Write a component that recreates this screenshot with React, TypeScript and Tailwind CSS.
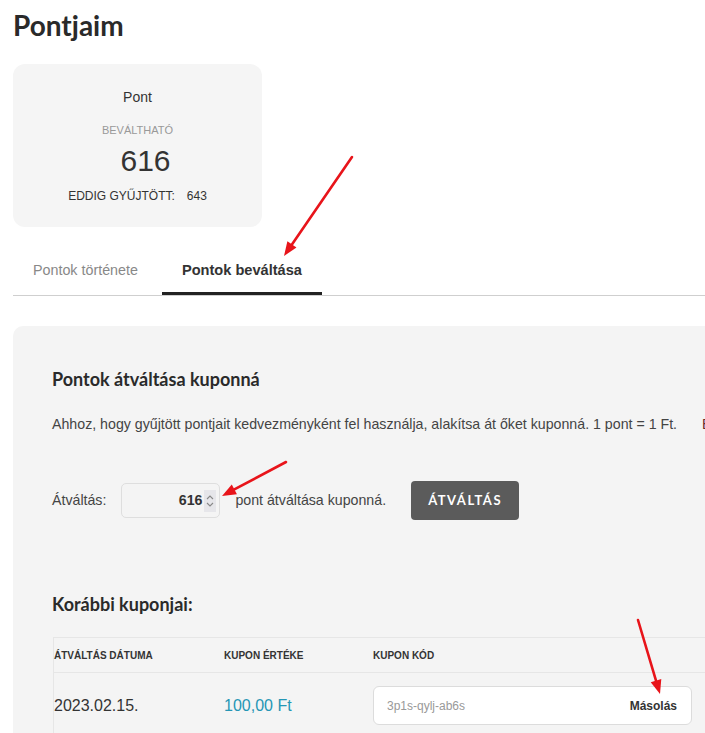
import React from 'react';

const arial = { fontFamily: '"Liberation Sans", Arial, sans-serif' };

function Arrow({x1, y1, x2, y2}: {x1: number; y1: number; x2: number; y2: number}) {
    // red annotation arrow, head drawn at (x2, y2)
    const a = Math.atan2(y2 - y1, x2 - x1);
    const len = 14;
    const w = 5.5;
    const bx = x2 - Math.cos(a) * len;
    const by = y2 - Math.sin(a) * len;
    const px = -Math.sin(a) * w;
    const py = Math.cos(a) * w;
    return (
        <g>
            <line x1={x1} y1={y1} x2={bx} y2={by} stroke="#e8141a" strokeWidth={2.6} strokeLinecap="round"/>
            <polygon points={`${x2},${y2} ${bx + px},${by + py} ${bx - px},${by - py}`} fill="#e8141a"/>
        </g>
    );
}

const App = () => {
    return (
        <div className="relative w-[705px] h-[733px] overflow-hidden bg-white text-[#333]" style={arial}>
            <div className="pl-[13px]">
                <h1 className="pt-2 text-[28px] leading-[34px] font-bold text-[#2a2a2a] font-['Lato']">Pontjaim</h1>

                <div className="mt-[22px] w-[249px] h-[163px] rounded-[12px] bg-[#f5f5f5] flex flex-col items-center pt-[23px]">
                    <div className="text-[14px] leading-[20px] text-[#333]">Pont</div>
                    <div className="mt-[15px] text-[11px] leading-[16px] text-[#999]">BEVÁLTHATÓ</div>
                    <div className="mt-[5px] pl-4 text-[30px] leading-[36px] text-[#333]">616</div>
                    <div className="mt-[9px] flex gap-3 text-[12px] leading-[16px] text-[#333]">
                        <span>EDDIG GYŰJTÖTT:</span>
                        <span>643</span>
                    </div>
                </div>

                <div className="mt-[18px] flex gap-1 border-b border-[#cfcfcf]">
                    <div className="h-[50px] pt-1 px-5 flex items-center border-b-[3px] border-transparent text-[14.3px] text-[#888]">
                        Pontok története
                    </div>
                    <div className="h-[50px] pt-1 px-5 flex items-center border-b-[3px] border-[#222] text-[14.6px] font-bold text-[#333]">
                        Pontok beváltása
                    </div>
                </div>

                <div className="mt-[30px] w-[760px] h-[420px] rounded-tl-[10px] bg-[#f4f4f4] pl-[39px] pt-[41px]">
                    <h2 className="text-[18px] leading-[24px] font-bold text-[#2a2a2a] font-['Lato']">Pontok átváltása kuponná</h2>
                    <p className="mt-[23px] whitespace-nowrap text-[14.2px] leading-[20px] text-[#444]">
                        Ahhoz, hogy gyűjtött pontjait kedvezményként fel használja, alakítsa át őket kuponná. 1 pont = 1 Ft.
                        <span className="ml-[25px] text-[#6b2b2b]">Bővebben</span>
                    </p>

                    <div className="mt-[47px] flex items-center h-[39px] text-[14.2px] text-[#444]">
                        <span>Átváltás:</span>
                        <div className="ml-[15px] w-[99px] h-[35px] rounded-[5px] border border-[#dedede] bg-[#f4f4f4] flex items-center justify-end pr-[3px]">
                            <span className="font-bold text-[#333]">616</span>
                            <span className="ml-[2px] w-[12px] h-[22px] bg-[#e6e6ea] flex items-center justify-center">
                                <svg width="8" height="16" viewBox="0 0 8 16" fill="none" stroke="#888" strokeWidth="1.1">
                                    <path d="M1 6 L4 3 L7 6"/>
                                    <path d="M1 10 L4 13 L7 10"/>
                                </svg>
                            </span>
                        </div>
                        <span className="ml-[15px]">pont átváltása kuponná.</span>
                        <button className="ml-[25px] w-[108px] h-[39px] rounded-[4px] bg-[#5b5b5b] text-white text-[13px] font-bold tracking-[1.5px] font-['Lato']">
                            ÁTVÁLTÁS
                        </button>
                    </div>

                    <h2 className="mt-[72px] text-[18px] leading-[24px] font-bold text-[#2a2a2a] font-['Lato']">Korábbi kuponjai:</h2>

                    <div className="mt-[21px] ml-px border-t border-l border-[#e6e6e6]">
                        <div className="flex h-[35px] items-center border-b border-[#e6e6e6] text-[10px] font-bold text-[#333]">
                            <div className="w-[170px]">ÁTVÁLTÁS DÁTUMA</div>
                            <div className="w-[149px]">KUPON ÉRTÉKE</div>
                            <div>KUPON KÓD</div>
                        </div>
                        <div className="flex items-center py-[13px] text-[16px]">
                            <div className="w-[170px] text-[#333]">2023.02.15.</div>
                            <div className="w-[149px] text-[#2596b5]">100,00 Ft</div>
                            <div className="w-[319px] h-[39px] rounded-[6px] border border-[#dcdcdc] bg-white flex items-center justify-between pl-[13px] pr-[14px] text-[12px]">
                                <span className="text-[#999]">3p1s-qylj-ab6s</span>
                                <span className="font-bold text-[#333]">Másolás</span>
                            </div>
                        </div>
                    </div>
                </div>
            </div>

            <svg className="absolute inset-0 pointer-events-none" width="705" height="733">
                <Arrow x1={352} y1={157} x2={284} y2={256}/>
                <Arrow x1={286} y1={462} x2={222} y2={496}/>
                <Arrow x1={638} y1={620} x2={660} y2={694}/>
            </svg>
        </div>
    );
};

export default App;
